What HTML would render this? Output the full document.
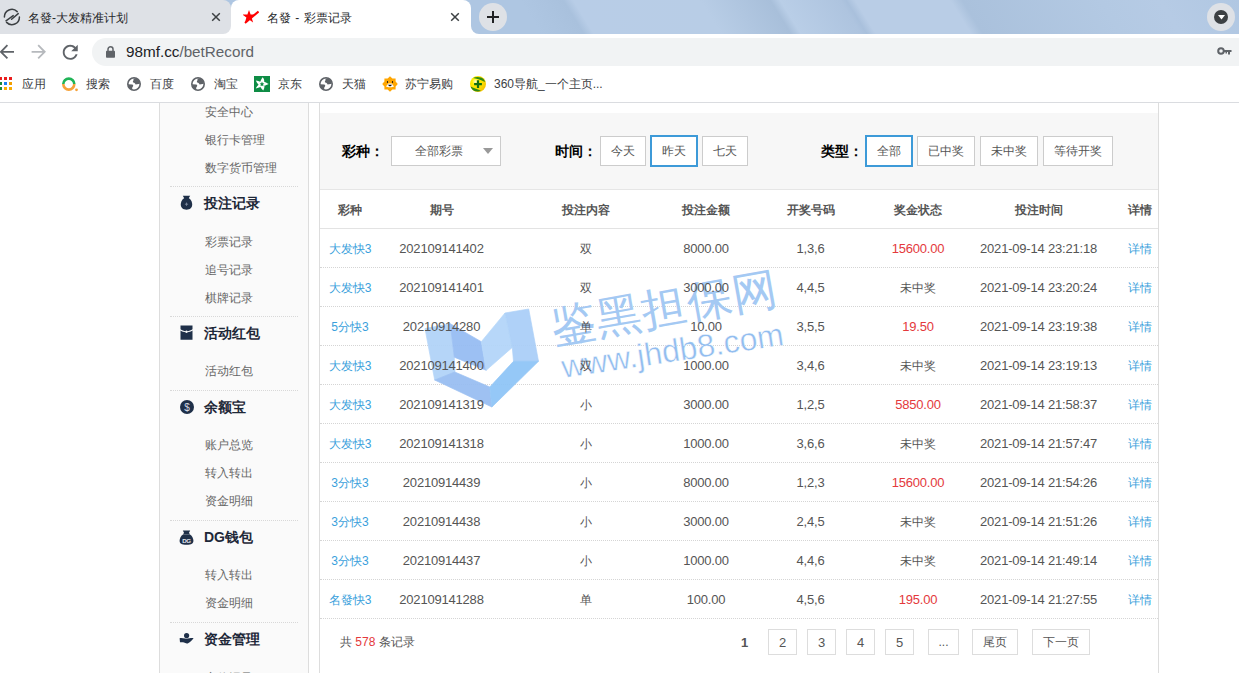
<!DOCTYPE html>
<html><head><meta charset="utf-8">
<style>
*{margin:0;padding:0;box-sizing:border-box}
html,body{width:1239px;height:673px;overflow:hidden;background:#fff;font-family:"Liberation Sans",sans-serif;}
.abs{position:absolute}
#strip{position:absolute;left:0;top:0;width:1239px;height:34px;overflow:hidden;background:#b1c8e3}
#stripin{position:absolute;left:-40px;top:0;width:1400px;height:34px;transform:skewX(31.7deg);transform-origin:0 0;background:linear-gradient(90deg,#aec6e2 0px,#aec6e2 560px,#a9c1dd 603px,#b8cde7 613px,#b8cde6 740px,#a8bfda 810px,#b9cee7 820px,#aec4df 880px,#a9c0dc 886px,#b9cde6 895px,#b9cde6 990px,#aac1dc 1002px,#b3c9e3 1140px,#b6cbe5 1200px,#b0c7e2 1280px,#b6cce6 1400px)}
.tab-in{position:absolute;left:0;top:0;width:231px;height:34px;background:#dee1e6;border-radius:0 8px 8px 0}
.tab-act{position:absolute;left:231px;top:0;width:240px;height:38px;background:#fff;border-radius:8px 8px 0 0}
.ttl{position:absolute;top:10px;font-size:12px;color:#26282b;word-spacing:1px;white-space:nowrap;line-height:16px}
#toolbar{position:absolute;left:0;top:34px;width:1239px;height:34px;background:#fff}
#omni{position:absolute;left:92px;top:38px;width:1200px;height:28px;border-radius:14px;background:#f1f3f4}
#bm{position:absolute;left:0;top:68px;width:1239px;height:35px;background:#fff;border-bottom:1px solid #dadce0}
.bmt{position:absolute;top:76px;font-size:12px;color:#3c4043;line-height:16px;white-space:nowrap}
#side{position:absolute;left:159px;top:103px;width:150px;height:580px;background:#fafafa;border-left:1px solid #ddd;border-right:1px solid #ddd}
.si{position:absolute;left:205px;font-size:12px;color:#666;line-height:16px;white-space:nowrap}
.sh{position:absolute;left:204px;font-size:14px;font-weight:bold;color:#1e2838;line-height:18px;white-space:nowrap}
.sep{position:absolute;left:170px;width:128px;height:1px;border-top:1px dotted #d8d8d8}
#main{position:absolute;left:319px;top:103px;width:840px;height:580px;border-left:1px solid #ddd;border-right:1px solid #ddd;background:#fff}
#filter{position:absolute;left:320px;top:113px;width:838px;height:77px;background:#f7f7f7;border-bottom:1px solid #e6e6e6}
.fl{position:absolute;top:142px;font-size:14px;font-weight:bold;color:#000;line-height:18px;white-space:nowrap}
.btn{position:absolute;top:136px;height:30px;border:1px solid #ccc;background:#fff;font-size:12px;color:#555;text-align:center;line-height:28px}
.btn.on{top:135px;height:32px;border:2px solid #3d9ad8;line-height:28px}
.th{position:absolute;top:202px;font-size:12px;font-weight:bold;color:#555;line-height:16px;white-space:nowrap;transform:translateX(-50%)}
.row{position:absolute;left:320px;width:838px;height:1px;border-top:1px dotted #d5d5d5}
.td{position:absolute;z-index:2;font-size:12px;color:#555;line-height:16px;white-space:nowrap;transform:translateX(-50%)}
.num{font-size:13px;letter-spacing:-0.2px}
.lk{color:#3a9fdc}
.red{color:#e4393c}
.pg{position:absolute;top:629px;height:26px;border:1px solid #ddd;background:#fff;font-size:12px;color:#555;text-align:center;line-height:24px}
</style></head><body>
<div id="strip"><div id="stripin"></div></div>
<div class="abs" style="left:220px;top:24px;width:20px;height:10px;background:#fff"></div>
<div class="tab-in"></div>
<div class="tab-act"></div>
<div class="abs" style="left:471px;top:24px;width:10px;height:10px;background:#fff"></div>
<div class="abs" style="left:471px;top:0;width:30px;height:34px;background:#aec6e2;border-bottom-left-radius:8px"></div>
<!-- tab 1 -->
<svg class="abs" style="left:3px;top:8px" width="18" height="18" viewBox="0 0 18 18"><g fill="none" stroke="#3c4043" stroke-width="1.5" stroke-linecap="round"><path d="M1.4 9A7.5 7.5 0 0 1 14.2 3.6"/><path d="M16.4 9A7.5 7.5 0 0 1 3.6 14.4"/><path d="M3 12.8L10.2 7.6M8.6 11.2L15.2 5.6"/></g></svg>
<div class="ttl" style="left:28px">名發-大发精准计划</div>
<svg class="abs" style="left:211px;top:12px" width="10" height="10" viewBox="0 0 10 10"><path d="M1.2 1.2L8.8 8.8M8.8 1.2L1.2 8.8" stroke="#3c4043" stroke-width="1.5"/></svg>
<!-- tab 2 -->
<svg class="abs" style="left:243px;top:10px" width="16" height="14" viewBox="0 0 16 14"><path d="M6 0L7.6 4.6L12.5 4.6L8.6 7.5L10.1 12.5L6 9.4L1.9 12.5L3.4 7.5L-0.5 4.6L4.4 4.6Z" fill="#f00"/><path d="M2 13L15.5 1.5" stroke="#f00" stroke-width="2"/></svg>
<div class="ttl" style="left:267px">名發 - 彩票记录</div>
<svg class="abs" style="left:450px;top:12px" width="10" height="10" viewBox="0 0 10 10"><path d="M1.2 1.2L8.8 8.8M8.8 1.2L1.2 8.8" stroke="#3c4043" stroke-width="1.5"/></svg>
<!-- new tab -->
<div class="abs" style="left:479px;top:3px;width:28px;height:28px;border-radius:50%;background:#dee1e6"></div>
<svg class="abs" style="left:487px;top:11px" width="12" height="12" viewBox="0 0 12 12"><path d="M6 0V12M0 6H12" stroke="#202124" stroke-width="2"/></svg>
<!-- dropdown -->
<div class="abs" style="left:1207px;top:3px;width:28px;height:28px;border-radius:50%;background:#dee1e6"></div>
<div class="abs" style="left:1214px;top:10px;width:14px;height:14px;border-radius:50%;background:#3c4043"></div>
<svg class="abs" style="left:1217.5px;top:14.6px" width="7" height="5" viewBox="0 0 7 5"><path d="M0 0H7L3.5 4.6Z" fill="#fff"/></svg>

<div id="toolbar"></div>
<div id="omni"></div>
<!-- nav icons -->
<svg class="abs" style="left:-4.2px;top:41.1px" width="21.6" height="21.6" viewBox="0 0 24 24"><path d="M20 11H7.83l5.59-5.59L12 4l-8 8 8 8 1.41-1.41L7.83 13H20v-2z" fill="#5f6368"/></svg>
<svg class="abs" style="left:28.4px;top:41.1px" width="21.6" height="21.6" viewBox="0 0 24 24"><path d="M12 4l-1.41 1.41L16.17 11H4v2h12.17l-5.58 5.59L12 20l8-8z" fill="#b6b9bd"/></svg>
<svg class="abs" style="left:58.9px;top:40.9px" width="22.5" height="22.5" viewBox="0 0 24 24"><path d="M17.65 6.35C16.2 4.9 14.21 4 12 4c-4.42 0-7.99 3.58-7.99 8s3.57 8 7.99 8c3.73 0 6.84-2.55 7.73-6h-2.08c-.82 2.33-3.04 4-5.65 4-3.31 0-6-2.69-6-6s2.69-6 6-6c1.66 0 3.14.69 4.22 1.78L13 11h7V4l-2.35 2.35z" fill="#5f6368"/></svg>
<svg class="abs" style="left:105.5px;top:45.5px" width="9" height="12" viewBox="0 0 9 12"><path d="M2 5V3.3A2.5 2.5 0 0 1 7 3.3V5" fill="none" stroke="#5f6368" stroke-width="1.5"/><rect x="0" y="4.8" width="9" height="7" rx="0.8" fill="#5f6368"/></svg>
<div class="abs" style="left:126px;top:43px;font-size:15.25px;line-height:18px;color:#202124;white-space:nowrap">98mf.cc<span style="color:#5f6368">/betRecord</span></div>
<svg class="abs" style="left:1217px;top:46px" width="15" height="10" viewBox="0 0 15 10"><circle cx="4" cy="5" r="2.8" fill="none" stroke="#5f6368" stroke-width="2"/><path d="M6.5 4H14.5V6H13V8.5H11V6H10V7.5H8.5V6H6.5Z" fill="#5f6368"/></svg>

<div id="bm"></div>
<!-- apps -->
<svg class="abs" style="left:-1px;top:77px" width="13" height="13" viewBox="0 0 13 13">
<rect x="0" y="0" width="3" height="3" fill="#ea1d1d"/><rect x="5" y="0" width="3" height="3" fill="#ea1d1d"/><rect x="10" y="0" width="3" height="3" fill="#ea1d1d"/>
<rect x="0" y="5" width="3" height="3" fill="#1a8a3c"/><rect x="5" y="5" width="3" height="3" fill="#1a7ff0"/><rect x="10" y="5" width="3" height="3" fill="#f29f00"/>
<rect x="0" y="10" width="3" height="3" fill="#1a8a3c"/><rect x="5" y="10" width="3" height="3" fill="#f9ab00"/><rect x="10" y="10" width="3" height="3" fill="#f9ab00"/></svg>
<div class="bmt" style="left:22px">应用</div>
<svg class="abs" style="left:62px;top:77px" width="17" height="15" viewBox="0 0 17 15"><path d="M1.3 7.1A5.5 5.5 0 0 1 12.3 7.1" fill="none" stroke="#1fb457" stroke-width="2.6"/><path d="M1.3 7.1A5.5 5.5 0 0 0 12.3 7.1" fill="none" stroke="#f6a23a" stroke-width="2.6"/><circle cx="14.5" cy="12.8" r="1.4" fill="#f6a23a"/></svg>
<div class="bmt" style="left:86px">搜索</div>
<svg class="abs" style="left:127px;top:77px" width="14" height="14" viewBox="0 0 14 14"><circle cx="7" cy="7" r="6.2" fill="#fff" stroke="#5f6368" stroke-width="1.6"/><path d="M6.2 1.6C6.8 2.6 6.6 3.6 6 4.2C5.6 4.8 6.1 5.5 7 5.8C7.8 6.1 8.4 6.8 8.6 7.6L12.9 6.8L12 3.4L9.2 1.2Z" fill="#5f6368"/><path d="M0.9 7.2L5.2 7.6C6.1 7.8 6.6 8.6 6 9.4C5.2 10.1 5 11.2 5.4 12.8L2.2 11.4Z" fill="#5f6368"/></svg>
<div class="bmt" style="left:150px">百度</div>
<svg class="abs" style="left:191px;top:77px" width="14" height="14" viewBox="0 0 14 14"><circle cx="7" cy="7" r="6.2" fill="#fff" stroke="#5f6368" stroke-width="1.6"/><path d="M6.2 1.6C6.8 2.6 6.6 3.6 6 4.2C5.6 4.8 6.1 5.5 7 5.8C7.8 6.1 8.4 6.8 8.6 7.6L12.9 6.8L12 3.4L9.2 1.2Z" fill="#5f6368"/><path d="M0.9 7.2L5.2 7.6C6.1 7.8 6.6 8.6 6 9.4C5.2 10.1 5 11.2 5.4 12.8L2.2 11.4Z" fill="#5f6368"/></svg>
<div class="bmt" style="left:214px">淘宝</div>
<svg class="abs" style="left:254px;top:76px" width="16" height="16" viewBox="0 0 16 16"><rect width="16" height="16" fill="#0e8c45"/><path d="M8.6 1.2C10 2.5 10.4 4.5 10.2 5.8C11.6 6.3 13.4 7.3 14.8 8C13.2 8.8 11.4 9.4 10.4 9.6C10.6 11 10.2 13 9.2 14.6C8 13.5 7 12.2 6.4 11.1C5 11.8 3.6 12.2 1.8 12.4C2.6 11 3.6 9.6 4.6 8.8C3.4 7.6 2.4 6.2 1.8 4.6C3.6 4.8 5 5.2 6.2 5.8C6.8 4.2 7.6 2.6 8.6 1.2Z" fill="#fff"/><path d="M8 5.6L8.7 7.3L10.4 7.4L9.1 8.6L9.5 10.3L8 9.4L6.5 10.3L6.9 8.6L5.6 7.4L7.3 7.3Z" fill="#0e8c45"/></svg>
<div class="bmt" style="left:278px">京东</div>
<svg class="abs" style="left:319px;top:77px" width="14" height="14" viewBox="0 0 14 14"><circle cx="7" cy="7" r="6.2" fill="#fff" stroke="#5f6368" stroke-width="1.6"/><path d="M6.2 1.6C6.8 2.6 6.6 3.6 6 4.2C5.6 4.8 6.1 5.5 7 5.8C7.8 6.1 8.4 6.8 8.6 7.6L12.9 6.8L12 3.4L9.2 1.2Z" fill="#5f6368"/><path d="M0.9 7.2L5.2 7.6C6.1 7.8 6.6 8.6 6 9.4C5.2 10.1 5 11.2 5.4 12.8L2.2 11.4Z" fill="#5f6368"/></svg>
<div class="bmt" style="left:342px">天猫</div>
<svg class="abs" style="left:382px;top:76px" width="16" height="16" viewBox="0 0 16 16"><path d="M8 0.2L10.4 2.4H13.6V5.6L15.8 8L13.6 10.4V13.6H10.4L8 15.8L5.6 13.6H2.4V10.4L0.2 8L2.4 5.6V2.4H5.6Z" fill="#ffa602"/><ellipse cx="5.5" cy="6.1" rx="0.6" ry="1" fill="#111"/><ellipse cx="10.5" cy="6.1" rx="0.6" ry="1" fill="#111"/><path d="M6.3 7.4H9.7L12 10.6C11 11.6 5 11.6 4 10.6Z" fill="#fff"/><path d="M5.8 8.8H10.2L8.6 10.2H7.4Z" fill="#111"/></svg>
<div class="bmt" style="left:405px">苏宁易购</div>
<svg class="abs" style="left:470px;top:76px" width="16" height="16" viewBox="0 0 16 16"><defs><radialGradient id="yg" cx="0.35" cy="0.35" r="0.7"><stop offset="0" stop-color="#fffbd0"/><stop offset="0.3" stop-color="#fff000"/><stop offset="1" stop-color="#f5c400"/></radialGradient></defs><circle cx="8" cy="8" r="8" fill="url(#yg)"/><path d="M3 2C6 0.5 11 0.5 14 3.5L15.2 6C12 4.5 9 3.5 6.5 2.8Z" fill="#2f8a12"/><path d="M0.6 10.5C3 12 7 12.6 11 14.8C8 16.4 3 15.5 1.2 12Z" fill="#2f8a12"/><path d="M6.9 4.2H9.1V7H11.9V9.2H9.1V12H6.9V9.2H4.1V7H6.9Z" fill="#136e13"/></svg>
<div class="bmt" style="left:494px">360导航_一个主页...</div>

<!-- page -->
<div id="side"></div>
<div class="si" style="top:104px">安全中心</div>
<div class="si" style="top:132px">银行卡管理</div>
<div class="si" style="top:160px">数字货币管理</div>
<div class="sep" style="top:186px"></div>
<div class="sh" style="top:194px">投注记录</div>
<div class="si" style="top:234px">彩票记录</div>
<div class="si" style="top:262px">追号记录</div>
<div class="si" style="top:290px">棋牌记录</div>
<div class="sep" style="top:316px"></div>
<div class="sh" style="top:324px">活动红包</div>
<div class="si" style="top:363px">活动红包</div>
<div class="sep" style="top:390px"></div>
<div class="sh" style="top:398px">余额宝</div>
<div class="si" style="top:437px">账户总览</div>
<div class="si" style="top:465px">转入转出</div>
<div class="si" style="top:493px">资金明细</div>
<div class="sep" style="top:520px"></div>
<div class="sh" style="top:528px">DG钱包</div>
<div class="si" style="top:567px">转入转出</div>
<div class="si" style="top:595px">资金明细</div>
<div class="sep" style="top:622px"></div>
<div class="sh" style="top:630px">资金管理</div>
<div class="si" style="top:670px">充值记录</div>

<div id="main"></div>
<div id="filter"></div>
<!-- watermark -->
<div id="wm" style="position:absolute;left:0;top:0;width:1239px;height:673px;z-index:1;pointer-events:none">
<svg class="abs" style="left:420px;top:300px;opacity:0.93" width="125" height="112" viewBox="420 300 125 112"><g stroke-width="0.7" stroke-linejoin="round">
<path d="M425 328.6L450.2 323.7L454.3 357.2L455 372.5L434.7 380Z" fill="#b0d2f8" stroke="#b0d2f8"/>
<path d="M450.2 323.7L481.3 341.7L486.2 370.3L454.3 357.2Z" fill="#95bcf3" stroke="#95bcf3"/>
<path d="M481.3 341.7L505 313L512.3 347.4L486.2 370.3Z" fill="#b2d5f9" stroke="#b2d5f9"/>
<path d="M505 313L528.7 309L538.5 361.3L513.5 361.3L512.3 347.4Z" fill="#a9cef8" stroke="#a9cef8"/>
<path d="M434.7 380L454.8 372L489.8 387L491.9 407Z" fill="#97bdf2" stroke="#97bdf2"/>
<path d="M489.8 387L513.5 361.3L538.5 361.3L491.9 407Z" fill="#8ec4f7" stroke="#8ec4f7"/>
</g></svg>
<div class="abs" style="left:555px;top:305px;transform:rotate(-10deg);transform-origin:0 100%;font-size:45px;line-height:45px;color:#a4c9f3;white-space:nowrap;letter-spacing:1px;font-weight:500">鉴黑担保网</div>
<div class="abs" style="left:564px;top:351px;transform:rotate(-8.5deg);transform-origin:0 100%;font-size:32px;line-height:32px;color:#92bdef;white-space:nowrap;letter-spacing:0px;-webkit-text-stroke:0.45px #fff">www.jhdb8.com</div>
</div>

<div class="fl" style="left:342px">彩种：</div>
<div class="btn" style="left:391px;width:110px;text-align:left;padding-left:23px">全部彩票</div>
<svg class="abs" style="left:483px;top:148px" width="10" height="6" viewBox="0 0 10 6"><path d="M0 0H10L5 6Z" fill="#999"/></svg>
<div class="fl" style="left:555px">时间：</div>
<div class="btn" style="left:600px;width:46px">今天</div>
<div class="btn on" style="left:650px;width:48px">昨天</div>
<div class="btn" style="left:702px;width:46px">七天</div>
<div class="fl" style="left:821px">类型：</div>
<div class="btn on" style="left:865px;width:48px">全部</div>
<div class="btn" style="left:917px;width:58px">已中奖</div>
<div class="btn" style="left:980px;width:58px">未中奖</div>
<div class="btn" style="left:1043px;width:70px">等待开奖</div>

<div class="abs" style="left:320px;top:228px;width:838px;height:1px;background:#e3e3e3"></div>
<div class="th" style="left:350px">彩种</div>
<div class="th" style="left:441.5px">期号</div>
<div class="th" style="left:586px">投注内容</div>
<div class="th" style="left:706px">投注金额</div>
<div class="th" style="left:810.5px">开奖号码</div>
<div class="th" style="left:918px">奖金状态</div>
<div class="th" style="left:1038.5px">投注时间</div>
<div class="th" style="left:1139.5px">详情</div>

<div class="td lk" style="left:350px;top:241px">大发快3</div>
<div class="td num" style="left:441.5px;top:241px">202109141402</div>
<div class="td" style="left:586px;top:241px">双</div>
<div class="td num" style="left:706px;top:241px">8000.00</div>
<div class="td num" style="left:810.5px;top:241px">1,3,6</div>
<div class="td red num" style="left:918px;top:241px">15600.00</div>
<div class="td num" style="left:1038.5px;top:241px">2021-09-14 23:21:18</div>
<div class="td lk" style="left:1139.5px;top:241px">详情</div>
<div class="row" style="top:267px"></div>
<div class="td lk" style="left:350px;top:280px">大发快3</div>
<div class="td num" style="left:441.5px;top:280px">202109141401</div>
<div class="td" style="left:586px;top:280px">双</div>
<div class="td num" style="left:706px;top:280px">3000.00</div>
<div class="td num" style="left:810.5px;top:280px">4,4,5</div>
<div class="td" style="left:918px;top:280px">未中奖</div>
<div class="td num" style="left:1038.5px;top:280px">2021-09-14 23:20:24</div>
<div class="td lk" style="left:1139.5px;top:280px">详情</div>
<div class="row" style="top:306px"></div>
<div class="td lk" style="left:350px;top:319px">5分快3</div>
<div class="td num" style="left:441.5px;top:319px">20210914280</div>
<div class="td" style="left:586px;top:319px">单</div>
<div class="td num" style="left:706px;top:319px">10.00</div>
<div class="td num" style="left:810.5px;top:319px">3,5,5</div>
<div class="td red num" style="left:918px;top:319px">19.50</div>
<div class="td num" style="left:1038.5px;top:319px">2021-09-14 23:19:38</div>
<div class="td lk" style="left:1139.5px;top:319px">详情</div>
<div class="row" style="top:345px"></div>
<div class="td lk" style="left:350px;top:358px">大发快3</div>
<div class="td num" style="left:441.5px;top:358px">202109141400</div>
<div class="td" style="left:586px;top:358px">双</div>
<div class="td num" style="left:706px;top:358px">1000.00</div>
<div class="td num" style="left:810.5px;top:358px">3,4,6</div>
<div class="td" style="left:918px;top:358px">未中奖</div>
<div class="td num" style="left:1038.5px;top:358px">2021-09-14 23:19:13</div>
<div class="td lk" style="left:1139.5px;top:358px">详情</div>
<div class="row" style="top:384px"></div>
<div class="td lk" style="left:350px;top:397px">大发快3</div>
<div class="td num" style="left:441.5px;top:397px">202109141319</div>
<div class="td" style="left:586px;top:397px">小</div>
<div class="td num" style="left:706px;top:397px">3000.00</div>
<div class="td num" style="left:810.5px;top:397px">1,2,5</div>
<div class="td red num" style="left:918px;top:397px">5850.00</div>
<div class="td num" style="left:1038.5px;top:397px">2021-09-14 21:58:37</div>
<div class="td lk" style="left:1139.5px;top:397px">详情</div>
<div class="row" style="top:423px"></div>
<div class="td lk" style="left:350px;top:436px">大发快3</div>
<div class="td num" style="left:441.5px;top:436px">202109141318</div>
<div class="td" style="left:586px;top:436px">小</div>
<div class="td num" style="left:706px;top:436px">1000.00</div>
<div class="td num" style="left:810.5px;top:436px">3,6,6</div>
<div class="td" style="left:918px;top:436px">未中奖</div>
<div class="td num" style="left:1038.5px;top:436px">2021-09-14 21:57:47</div>
<div class="td lk" style="left:1139.5px;top:436px">详情</div>
<div class="row" style="top:462px"></div>
<div class="td lk" style="left:350px;top:475px">3分快3</div>
<div class="td num" style="left:441.5px;top:475px">20210914439</div>
<div class="td" style="left:586px;top:475px">小</div>
<div class="td num" style="left:706px;top:475px">8000.00</div>
<div class="td num" style="left:810.5px;top:475px">1,2,3</div>
<div class="td red num" style="left:918px;top:475px">15600.00</div>
<div class="td num" style="left:1038.5px;top:475px">2021-09-14 21:54:26</div>
<div class="td lk" style="left:1139.5px;top:475px">详情</div>
<div class="row" style="top:501px"></div>
<div class="td lk" style="left:350px;top:514px">3分快3</div>
<div class="td num" style="left:441.5px;top:514px">20210914438</div>
<div class="td" style="left:586px;top:514px">小</div>
<div class="td num" style="left:706px;top:514px">3000.00</div>
<div class="td num" style="left:810.5px;top:514px">2,4,5</div>
<div class="td" style="left:918px;top:514px">未中奖</div>
<div class="td num" style="left:1038.5px;top:514px">2021-09-14 21:51:26</div>
<div class="td lk" style="left:1139.5px;top:514px">详情</div>
<div class="row" style="top:540px"></div>
<div class="td lk" style="left:350px;top:553px">3分快3</div>
<div class="td num" style="left:441.5px;top:553px">20210914437</div>
<div class="td" style="left:586px;top:553px">小</div>
<div class="td num" style="left:706px;top:553px">1000.00</div>
<div class="td num" style="left:810.5px;top:553px">4,4,6</div>
<div class="td" style="left:918px;top:553px">未中奖</div>
<div class="td num" style="left:1038.5px;top:553px">2021-09-14 21:49:14</div>
<div class="td lk" style="left:1139.5px;top:553px">详情</div>
<div class="row" style="top:579px"></div>
<div class="td lk" style="left:350px;top:592px">名發快3</div>
<div class="td num" style="left:441.5px;top:592px">202109141288</div>
<div class="td" style="left:586px;top:592px">单</div>
<div class="td num" style="left:706px;top:592px">100.00</div>
<div class="td num" style="left:810.5px;top:592px">4,5,6</div>
<div class="td red num" style="left:918px;top:592px">195.00</div>
<div class="td num" style="left:1038.5px;top:592px">2021-09-14 21:27:55</div>
<div class="td lk" style="left:1139.5px;top:592px">详情</div>
<div class="row" style="top:618px"></div>

<!-- sidebar icons -->
<svg class="abs" style="left:180px;top:195px" width="13" height="15" viewBox="0 0 13 15"><path d="M2.8 0.8H10.2L8.6 3.4H4.4Z" fill="#1f3049"/><path d="M4.3 3C1.4 4.8 0.8 7.5 0.8 9.6C0.8 12.8 3 14.8 6.5 14.8C10 14.8 12.2 12.8 12.2 9.6C12.2 7.5 11.6 4.8 8.7 3Z" fill="#1f3049"/><path d="M6.5 7.6V10.8M4.9 9.2H8.1" stroke="#7f8ba0" stroke-width="0.9"/></svg>
<svg class="abs" style="left:180px;top:325px" width="13" height="15" viewBox="0 0 13 15"><path d="M0.5 0.6H12.5V4.2C11 5.4 9 5.8 7.6 6.3A1.2 1.2 0 0 0 5.4 6.3C4 5.8 2 5.4 0.5 4.2Z" fill="#1f3049"/><path d="M0.5 5.4C2 6.4 4 6.9 5.4 7.2A1.2 1.2 0 0 0 7.6 7.2C9 6.9 11 6.4 12.5 5.4V14.8H0.5Z" fill="#1f3049"/></svg>
<svg class="abs" style="left:179.5px;top:399.5px" width="14" height="14" viewBox="0 0 14 14"><circle cx="7" cy="7" r="7" fill="#1f3049"/><text x="7" y="10.8" font-size="10" text-anchor="middle" fill="#d5dae3" font-family="Liberation Sans">$</text></svg>
<svg class="abs" style="left:179px;top:530px" width="15" height="15" viewBox="0 0 15 15"><path d="M3.8 0.6H11.2L10 2.8L11 4.6H4L5 2.8Z" fill="#1f3049"/><path d="M4 4.4C1.6 6 0.6 8.6 0.6 10.8C0.6 13.4 2.4 14.8 7.5 14.8C12.6 14.8 14.4 13.4 14.4 10.8C14.4 8.6 13.4 6 11 4.4Z" fill="#1f3049"/><text x="7.5" y="12.6" font-size="6.2" font-weight="bold" text-anchor="middle" fill="#e6e9ee" font-family="Liberation Sans" letter-spacing="-0.3">DG</text></svg>
<svg class="abs" style="left:179px;top:632px" width="15" height="12" viewBox="0 0 15 12"><circle cx="7.6" cy="3.6" r="2.6" fill="#1f3049"/><path d="M0.6 6.2C2.5 5.6 4.5 6.4 6.2 6.6C7.5 6.8 9 6.4 10.5 6.2C12 6 13.5 5.8 14.6 6.2C13 8.2 11 10.4 8.6 11.4C7.2 11.8 6 11 5 10.6C3.5 10 2 10.5 1 10.2Z" fill="#1f3049"/></svg>

<!-- footer -->
<div class="abs" style="left:340px;top:634px;font-size:12px;color:#555;line-height:16px;white-space:nowrap">共 <span class="red">578</span> 条记录</div>
<div class="abs" style="left:741px;top:635px;font-size:13px;font-weight:bold;color:#555;line-height:16px">1</div>
<div class="pg" style="left:768px;width:29px;font-size:13px;line-height:25px">2</div>
<div class="pg" style="left:807px;width:29px;font-size:13px;line-height:25px">3</div>
<div class="pg" style="left:846px;width:29px;font-size:13px;line-height:25px">4</div>
<div class="pg" style="left:885px;width:29px;font-size:13px;line-height:25px">5</div>
<div class="pg" style="left:928px;width:31px">...</div>
<div class="pg" style="left:972px;width:46px">尾页</div>
<div class="pg" style="left:1032px;width:58px">下一页</div>

</body></html>
